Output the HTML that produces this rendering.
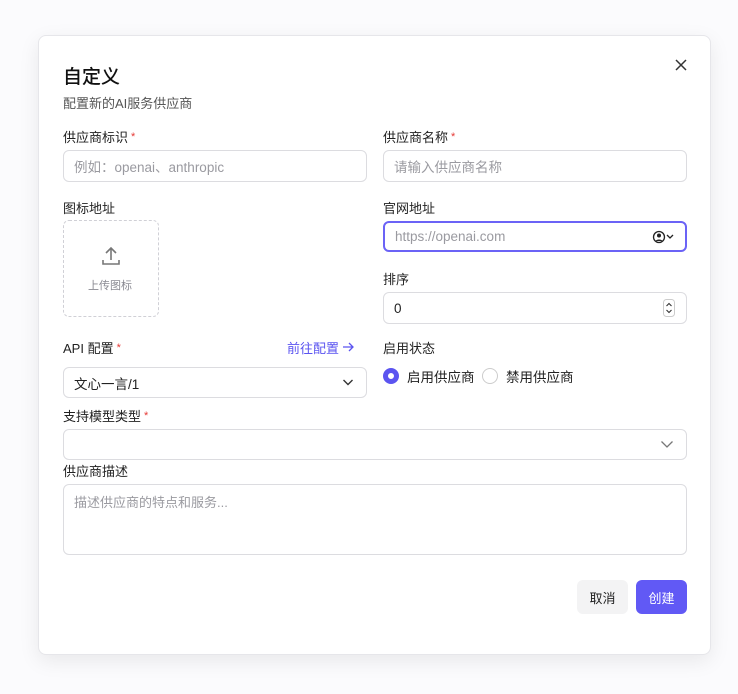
<!DOCTYPE html>
<html><head><meta charset="utf-8"><style>
*{box-sizing:border-box;margin:0;padding:0}
body{width:738px;height:694px;background:#fbfbfd;font-family:"Liberation Sans","Noto Sans CJK SC",sans-serif;position:relative;overflow:hidden;color:#1f1f1f}
.dlg{position:absolute;left:38px;top:35px;width:673px;height:620px;background:#fff;border:1px solid #e6e6ea;border-radius:8px;box-shadow:0 6px 20px rgba(0,0,0,.08)}
.a{position:absolute;white-space:nowrap}
.lbl{font-size:13px;color:#222}
.req{color:#e53935;font-size:11px;position:relative;top:-2px;margin-left:3px}
.in{position:absolute;border:1px solid #dcdce0;border-radius:6px;background:#fff;font-size:13.5px;color:#9a9aa0;padding-left:10px;display:flex;align-items:center}
</style></head><body>
<div class="dlg"></div>
<div class="a" style="left:63px;top:62px;font-size:19px;font-weight:500;color:#111">自定义</div>
<div class="a" style="left:63px;top:93px;font-size:13px;color:#555">配置新的AI服务供应商</div>
<svg class="a" style="left:674px;top:58px" width="14" height="14" viewBox="0 0 14 14"><path d="M2 2L12 12M12 2L2 12" stroke="#333" stroke-width="1.5"/></svg>

<div class="a lbl" style="left:63px;top:127px">供应商标识<span class="req">*</span></div>
<div class="in" style="left:63px;top:150px;width:304px;height:32px">例如：openai、anthropic</div>
<div class="a lbl" style="left:383px;top:127px">供应商名称<span class="req">*</span></div>
<div class="in" style="left:383px;top:150px;width:304px;height:32px">请输入供应商名称</div>

<div class="a lbl" style="left:63px;top:198px">图标地址</div>
<div class="a" style="left:63px;top:220px;width:96px;height:97px;border:1px dashed #d0d0d6;border-radius:6px"></div>
<svg class="a" style="left:100px;top:245px" width="22" height="22" viewBox="0 0 22 22" fill="none" stroke="#777" stroke-width="1.6"><path d="M11 3v12M6 8l5-5 5 5M3 15v4h16v-4"/></svg>
<div class="a" style="left:88px;top:277px;font-size:11px;color:#8a8a92">上传图标</div>

<div class="a lbl" style="left:383px;top:198px">官网地址</div>
<div class="in" style="left:383px;top:221px;width:304px;height:31px;border:2px solid #6b63f6;color:#9a9aa0">https://openai.com</div>
<svg class="a" style="left:652px;top:230px" width="26" height="14" viewBox="0 0 26 14"><circle cx="7" cy="7" r="5.5" fill="none" stroke="#222" stroke-width="1.3"/><circle cx="7" cy="5.5" r="2" fill="#222"/><path d="M3.5 11c1-2 6-2 7 0" fill="#222"/><path d="M15 5l3 3 3-3" stroke="#222" stroke-width="1.3" fill="none"/></svg>

<div class="a lbl" style="left:383px;top:269px">排序</div>
<div class="in" style="left:383px;top:292px;width:304px;height:32px;color:#222">0</div>
<svg class="a" style="left:663px;top:299px" width="12" height="18" viewBox="0 0 12 18"><rect x=".5" y=".5" width="11" height="17" rx="3" fill="#fff" stroke="#ccc"/><path d="M3.5 7l2.5-2.5 2.5 2.5M3.5 11l2.5 2.5 2.5-2.5" stroke="#333" stroke-width="1.1" fill="none"/></svg>

<div class="a lbl" style="left:63px;top:338px">API 配置<span class="req">*</span></div>
<div class="a" style="left:287px;top:338px;font-size:13px;color:#5b54f0">前往配置</div>
<svg class="a" style="left:342px;top:341px" width="13" height="12" viewBox="0 0 13 12"><path d="M1 6h10M7 2l4 4-4 4" stroke="#5b54f0" stroke-width="1.3" fill="none"/></svg>
<div class="in" style="left:63px;top:367px;width:304px;height:31px;color:#222">文心一言/1</div>
<svg class="a" style="left:342px;top:377px" width="12" height="10" viewBox="0 0 12 10"><path d="M1.5 3l4.5 4.5 4.5-4.5" stroke="#333" stroke-width="1.4" fill="none"/></svg>

<div class="a lbl" style="left:383px;top:338px">启用状态</div>
<div class="a" style="left:383px;top:368px;width:16px;height:16px;border-radius:50%;border:5px solid #5b54f0;background:#fff"></div>
<div class="a" style="left:407px;top:366px;font-size:13.5px;color:#222">启用供应商</div>
<div class="a" style="left:482px;top:368px;width:16px;height:16px;border-radius:50%;border:1px solid #ccc"></div>
<div class="a" style="left:506px;top:366px;font-size:13.5px;color:#222">禁用供应商</div>

<div class="a lbl" style="left:63px;top:406px">支持模型类型<span class="req">*</span></div>
<div class="in" style="left:63px;top:429px;width:624px;height:31px"></div>
<svg class="a" style="left:660px;top:439px" width="14" height="10" viewBox="0 0 14 10"><path d="M1.5 2.5l5.5 5.5 5.5-5.5" stroke="#777" stroke-width="1.3" fill="none"/></svg>

<div class="a lbl" style="left:63px;top:461px">供应商描述</div>
<div class="in" style="left:63px;top:484px;width:624px;height:71px;align-items:flex-start;padding-top:7px;font-size:13px">描述供应商的特点和服务...</div>

<div class="a" style="left:577px;top:580px;width:51px;height:34px;background:#f3f3f4;border-radius:6px;font-size:13px;color:#222;display:flex;align-items:center;justify-content:center">取消</div>
<div class="a" style="left:636px;top:580px;width:51px;height:34px;background:#6159f5;border-radius:6px;font-size:13px;color:#fff;display:flex;align-items:center;justify-content:center">创建</div>
</body></html>
